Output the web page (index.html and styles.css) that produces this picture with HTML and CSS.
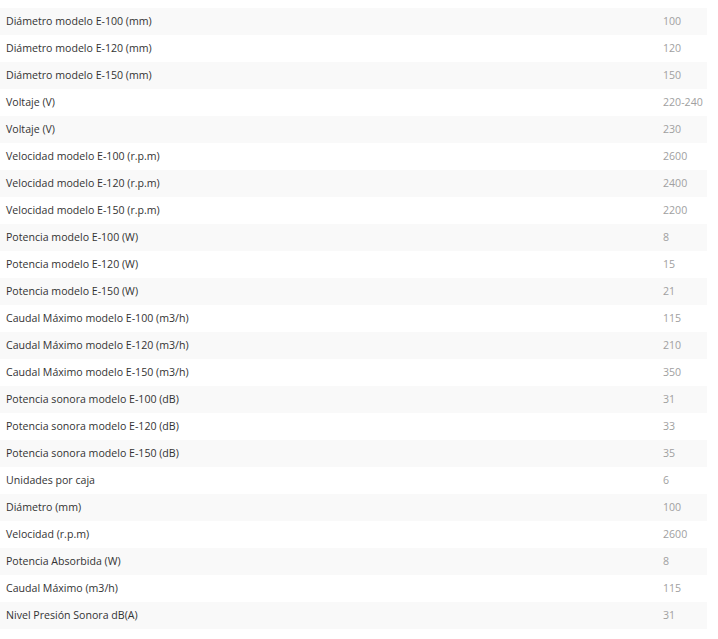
FILE: index.html
```html
<!DOCTYPE html>
<html lang="es">
<head>
<meta charset="utf-8">
<link rel="stylesheet" href="styles.css">
</head>
<body>
<table class="specs">
<tbody>
<tr><td class="k">Diámetro modelo E-100 (mm)</td><td class="v">100</td></tr>
<tr><td class="k">Diámetro modelo E-120 (mm)</td><td class="v">120</td></tr>
<tr><td class="k">Diámetro modelo E-150 (mm)</td><td class="v">150</td></tr>
<tr><td class="k">Voltaje (V)</td><td class="v">220-240</td></tr>
<tr><td class="k">Voltaje (V)</td><td class="v">230</td></tr>
<tr><td class="k">Velocidad modelo E-100 (r.p.m)</td><td class="v">2600</td></tr>
<tr><td class="k">Velocidad modelo E-120 (r.p.m)</td><td class="v">2400</td></tr>
<tr><td class="k">Velocidad modelo E-150 (r.p.m)</td><td class="v">2200</td></tr>
<tr><td class="k">Potencia modelo E-100 (W)</td><td class="v">8</td></tr>
<tr><td class="k">Potencia modelo E-120 (W)</td><td class="v">15</td></tr>
<tr><td class="k">Potencia modelo E-150 (W)</td><td class="v">21</td></tr>
<tr><td class="k">Caudal Máximo modelo E-100 (m3/h)</td><td class="v">115</td></tr>
<tr><td class="k">Caudal Máximo modelo E-120 (m3/h)</td><td class="v">210</td></tr>
<tr><td class="k">Caudal Máximo modelo E-150 (m3/h)</td><td class="v">350</td></tr>
<tr><td class="k">Potencia sonora modelo E-100 (dB)</td><td class="v">31</td></tr>
<tr><td class="k">Potencia sonora modelo E-120 (dB)</td><td class="v">33</td></tr>
<tr><td class="k">Potencia sonora modelo E-150 (dB)</td><td class="v">35</td></tr>
<tr><td class="k">Unidades por caja</td><td class="v">6</td></tr>
<tr><td class="k">Diámetro (mm)</td><td class="v">100</td></tr>
<tr><td class="k">Velocidad (r.p.m)</td><td class="v">2600</td></tr>
<tr><td class="k">Potencia Absorbida (W)</td><td class="v">8</td></tr>
<tr><td class="k">Caudal Máximo (m3/h)</td><td class="v">115</td></tr>
<tr><td class="k">Nivel Presión Sonora dB(A)</td><td class="v">31</td></tr>
</tbody>
</table>
</body>
</html>
```
FILE: styles.css
```css
html, body {
  margin: 0;
  padding: 0;
  background: #ffffff;
}
body {
  padding-top: 8px;
  font-family: "Open Sans", "Noto Sans", sans-serif;
  font-size: 10.6px;
}
.specs {
  width: 707px;
  border-collapse: collapse;
  table-layout: fixed;
}
.specs tr {
  height: 27px;
}
.specs tr:nth-child(odd) {
  background: #f9f9f9;
}
.specs td {
  padding: 0 6px;
  vertical-align: middle;
  line-height: 15px;
  white-space: nowrap;
}
.specs .k {
  color: #333333;
}
.specs .v {
  width: 44px;
  padding-right: 0;
  color: #a0a0a0;
}
```
